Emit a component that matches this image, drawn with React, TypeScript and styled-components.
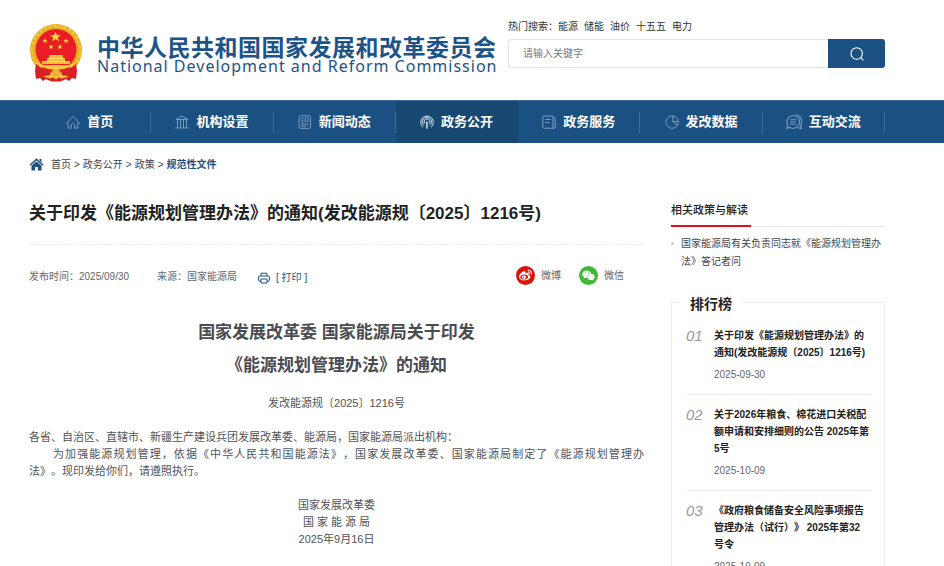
import React from "react";
import styled, { createGlobalStyle } from "styled-components";
import { FaWeibo, FaWeixin } from "react-icons/fa";

const BLUE = "#1b5182";

const GlobalStyle = createGlobalStyle`
  *, *::before, *::after { box-sizing: border-box; }
  body {
    margin: 0;
    background: #fff;
    color: #444;
    font-family: "Liberation Sans", "Noto Sans CJK SC", sans-serif;
    font-size: 10px;
    line-height: 17px;
    text-spacing-trim: space-all;
  }
  h1, h2, h3, p, ul, ol { margin: 0; padding: 0; }
  ul, ol { list-style: none; }
  a { color: inherit; text-decoration: none; }
`;

const Shell = styled.div`
  margin: 0 59px 0 29px;
`;

const Header = styled(Shell).attrs({ as: "header" })`
  display: flex;
  align-items: flex-start;
  justify-content: space-between;
  height: 100px;
`;

const Brand = styled.a`
  display: flex;
  align-items: flex-start;
  gap: 14px;
  padding-top: 24px;
  color: #1c5488;
  white-space: nowrap;
`;

const BrandText = styled.span`
  display: flex;
  flex-direction: column;
  padding-top: 10px;
`;

const BrandCn = styled.span`
  width: 399px;
  font-family: "Noto Sans CJK SC", sans-serif;
  font-size: 23px;
  font-weight: 700;
  line-height: 24px;
  text-align-last: justify;
`;

const BrandEn = styled.span`
  font-family: "Noto Sans", sans-serif;
  font-size: 16px;
  line-height: 16px;
  letter-spacing: 1px;
`;

const SearchArea = styled.div`
  width: 377px;
  padding-top: 18px;
`;

const HotWords = styled.div`
  display: flex;
  gap: 6px;
  line-height: 18px;
  color: #333;
`;

const HotLabel = styled.span`
  margin-right: -6px;
`;

const SearchForm = styled.form`
  display: flex;
  height: 29px;
  margin-top: 3px;
`;

const SearchInput = styled.input`
  flex: 1;
  min-width: 0;
  padding: 0 14px;
  border: 1px solid #e3e3e3;
  border-right: 0;
  border-radius: 3px 0 0 3px;
  font: inherit;
  color: #333;
  outline: none;
  &::placeholder { color: #777; opacity: 1; }
`;

const SearchButton = styled.button`
  display: flex;
  align-items: center;
  justify-content: center;
  width: 57px;
  padding: 0;
  border: 0;
  border-radius: 0 3px 3px 0;
  background: ${BLUE};
  color: #fff;
`;

const NavBar = styled.nav`
  background: ${BLUE};
  border-top: 1px solid #3b6b95;
`;

const NavList = styled(Shell).attrs({ as: "ul" })`
  display: grid;
  grid-template-columns: repeat(7, 1fr);
`;

const NavItem = styled.li<{ $active?: boolean }>`
  display: flex;
  align-items: center;
  height: 42px;
  background: ${(p) => (p.$active ? "#174872" : "transparent")};
  color: ${(p) => (p.$active ? "#d5e0ea" : "#7b9dbc")};
  &::after {
    content: "";
    width: 1px;
    height: 21px;
    background: ${(p) => (p.$active ? "transparent" : "#3c6c97")};
  }
`;

const NavLink = styled.a`
  display: flex;
  flex: 1;
  align-items: center;
  justify-content: center;
  gap: 7px;
`;

const NavText = styled.span`
  color: #fff;
  font-size: 13px;
  font-weight: 700;
  line-height: 20px;
`;

const Columns = styled(Shell).attrs({ as: "main" })`
  display: grid;
  grid-template-columns: minmax(0, 1fr) 214px;
  gap: 27px;
`;

const Crumbs = styled(Shell).attrs({ as: "nav" })`
  display: flex;
  align-items: center;
  gap: 3px;
  height: 43px;
  color: #444;
`;

const HomeLink = styled.a`
  display: flex;
  margin-right: 4px;
  color: ${BLUE};
`;

const CurrentCrumb = styled.a`
  color: ${BLUE};
  font-weight: 700;
`;

const Title = styled.h1`
  padding: 15px 0 17px;
  border-bottom: 1px dashed #e8e8e8;
  color: #222;
  font-size: 17px;
  line-height: 26px;
`;

const Meta = styled.div`
  display: flex;
  align-items: center;
  height: 63px;
  color: #666;
`;

const Source = styled.span`
  margin-left: 28px;
`;

const PrintButton = styled.button`
  display: flex;
  align-items: center;
  gap: 6px;
  margin-left: 21px;
  padding: 2px 0 0;
  border: 0;
  background: none;
  color: ${BLUE};
  font: inherit;
`;

const Share = styled.div`
  display: flex;
  gap: 18px;
  margin-left: auto;
  padding: 0 20px 2px 0;
`;

const ShareLink = styled.a`
  display: flex;
  align-items: center;
  gap: 6px;
`;

const Round = styled.span<{ $color: string }>`
  display: flex;
  align-items: center;
  justify-content: center;
  width: 19px;
  height: 19px;
  border-radius: 50%;
  background: ${(p) => p.$color};
  color: #fff;
`;

const DocTitle = styled.h2`
  padding-top: 8px;
  color: #4a4c52;
  font-size: 17px;
  line-height: 33px;
  text-align: center;
`;

const DocBody = styled.div`
  color: #505258;
  font-size: 11px;
  line-height: 17px;
`;

const Centered = styled.p`
  padding: 13px 0 17px;
  text-align: center;
`;

const Signature = styled.p`
  padding: 17px 0;
  text-align: center;
`;

const Spread = styled.span`
  display: block;
  padding-left: 24px;
  text-align-last: justify;
`;

const Side = styled.aside`
  padding-top: 12px;
`;

const SideHead = styled.div`
  display: flex;
  height: 29px;
  border-bottom: 1px solid #e6e6e6;
`;

const SideTitle = styled.h2`
  height: 29px;
  padding-right: 3px;
  border-bottom: 2px solid #d8131b;
  color: #222;
  font-size: 11px;
  font-weight: 500;
  line-height: 24px;
`;

const Related = styled.li`
  display: flex;
  gap: 7px;
  padding-top: 8px;
  line-height: 18px;
  &::before {
    content: "";
    flex: none;
    width: 3px;
    height: 3px;
    margin-top: 7px;
    border-radius: 50%;
    background: #ccc;
  }
`;

const RankBox = styled.fieldset`
  min-width: 0;
  margin: 19px 0 0;
  padding: 2px 14px 0;
  border: 1px solid #ebebeb;
`;

const RankLegend = styled.legend`
  margin-left: -6px;
  padding: 4px 10px 0;
  color: #222;
  font-size: 14px;
  font-weight: 700;
  line-height: 20px;
`;

const RankItem = styled.li`
  display: grid;
  grid-template-columns: 28px 1fr;
  padding: 11px 0;
  & + & { border-top: 1px solid #ebebeb; }
`;

const RankNo = styled.span`
  color: #999;
  font-size: 15px;
  font-style: italic;
`;

const RankTitle = styled.h3`
  color: #222;
  font-size: 10px;
  font-weight: 700;
  line-height: 17px;
`;

const RankDate = styled.time`
  display: block;
  padding-top: 5px;
  color: #666;
`;

const Emblem = () => (
  <svg width="54" height="58" viewBox="0 0 54 58" aria-hidden="true">
    <circle cx="27" cy="26" r="26" fill="#e8ae26" />
    <circle cx="27" cy="26" r="24" fill="none" stroke="#f4c843" strokeWidth="2" strokeDasharray="3 2" />
    <circle cx="27" cy="25.500" r="20.5" fill="#ea1c25" />
    <path d="M26.500 7.500 28 11.200h4l-3.200 2.400L30 17.400l-3.500-2.300L23 17.400l1.200-3.800L21 11.200h4z" fill="#fbd43c" />
    <g fill="#fbd43c">
      <path id="star" d="M16 14.200l.8 1.700h1.800l-1.400 1.200.5 1.900-1.700-1.100-1.700 1.100.5-1.900-1.400-1.200h1.800z" />
      <use href="#star" x="21" />
      <use href="#star" x="6" y="6" />
      <use href="#star" x="15" y="6" />
    </g>
    <path d="M20 31h14v3h2v3h5v3H13v-3h5v-3h2z" fill="#f4bd38" />
    <path d="M19 34.500h16M16 37.500h22" stroke="#fbdc72" strokeWidth="1" />
    <path d="M8 39q8 3 14 2h10q6 1 14-2l-1 4q-6 3-12 3l-6 2-6-2q-7 0-12-3z" fill="#f6c640" />
    <path d="M7 40q7 6 14 6v11l-4-2-3 2-3-3-4 1-1-8zM47 40q-7 6-14 6v11l4-2 3 2 3-3 4 1 1-8z" fill="#d71f25" />
    <path d="M13 43q7 3 14 3t14-3l-2 4q-5 2-12 2t-12-2z" fill="#e02026" />
    <circle cx="27" cy="49.500" r="4.500" fill="#efb431" />
    <path d="M14 53q5-3 9-1l4 2 4-2q4-2 9 1l-6 1-3 3h-8l-3-3z" fill="#f5c33a" />
    <path d="M20 55l4-1.500 3 2 3-2 4 1.500-2 2.500H22z" fill="#d71f25" />
  </svg>
);

const HomeIcon = () => (
  <svg width="15" height="13" viewBox="0 0 15 13" fill="currentColor" aria-hidden="true">
    <path d="M7.500 0.500 14.300 6.700 13.500 7.600 7.500 2.300 1.500 7.600.7 6.700z" stroke="currentColor" strokeWidth=".4" />
    <path d="M10.500 1h2v3.400l-2-1.800zM7.500 3.400l5 4.400v4.700H9V9H6v3.500H2.500V7.800z" />
  </svg>
);

const glyphs: Record<string, React.ReactNode> = {
  home: <path d="M.6 8.200 7 1.200l6.400 7H11.800v4.900H8.700V9.800c0-2-3.400-2-3.400 0v3.300H2.200V8.200z" />,
  bank: <path d="M1 4.500 7 1l6 3.500zM2.500 5v7.200M5.500 5v7.200M8.500 5v7.200M11.500 5v7.200M.5 12.900h13" />,
  news: (
    <>
      <rect x="1" y=".8" width="11.500" height="12.500" rx="1.500" />
      <path d="M3 3.200h2.500M3 5.200h2.500M3 7.200h2.500M3 9.200h7.500M3 11.200h5" />
      <circle cx="8.700" cy="4.800" r="2" />
    </>
  ),
  signal: (
    <>
      <path d="M3 12.200a6.300 6.300 0 1 1 8 0M4 10.200a4.500 4.500 0 1 1 6 0M5 8.400a2.700 2.700 0 1 1 4 0" />
      <path d="M7 6.500v7.300" strokeWidth="1.500" />
    </>
  ),
  book: <path d="M1.800 1h8.400c.6 0 .8.3.8.8v11.400H1.800c-.6 0-1-.4-1-1V2c0-.6.4-1 1-1zM3 4.500h5.500M3 7.500h4M11 2.500h1c.8 0 1.200.4 1.200 1v8.700c0 .6-.4 1-1.200 1h-1" />,
  pie: <path d="M6 1a6.200 6.200 0 1 0 7.200 7.200M7.800 1v5.500h5.600A5.600 5.600 0 0 0 7.800 1zM7.800 6.500l4.600 3.700M6 1l1.800 0M13.200 8.200l.2-1.700" />,
  chat: (
    <>
      <path d="M6.300 1.500a5.500 5.500 0 0 0-4.600 8.600l-.9 2.400 2.700-.8A5.500 5.500 0 1 0 6.300 1.500zM3.800 5h5M3.800 7h5M3.800 9h5" />
      <path d="M8.500.7a5.900 5.900 0 0 1 4.200 9.300l.8 2.700-3-.7" />
    </>
  ),
};

const NavIcon = ({ name }: { name: string }) => (
  <svg
    width={name === "chat" ? 16 : 14}
    height={name === "chat" ? 16 : 14}
    viewBox="0 0 14 14"
    fill="none"
    stroke="currentColor"
    strokeWidth="1"
    aria-hidden="true"
  >
    {glyphs[name]}
  </svg>
);

const navItems = [
  ["home", "首页"],
  ["bank", "机构设置"],
  ["news", "新闻动态"],
  ["signal", "政务公开"],
  ["book", "政务服务"],
  ["pie", "发改数据"],
  ["chat", "互动交流"],
];

const ranking = [
  { title: "关于印发《能源规划管理办法》的通知(发改能源规〔2025〕1216号)", date: "2025-09-30" },
  { title: "关于2026年粮食、棉花进口关税配额申请和安排细则的公告 2025年第5号", date: "2025-10-09" },
  { title: "《政府粮食储备安全风险事项报告管理办法（试行）》 2025年第32号令", date: "2025-10-09" },
];

export default function App() {
  return (
    <>
      <GlobalStyle />
      <Header>
        <Brand href="#">
          <Emblem />
          <BrandText>
            <BrandCn>中华人民共和国国家发展和改革委员会</BrandCn>
            <BrandEn>National Development and Reform Commission</BrandEn>
          </BrandText>
        </Brand>
        <SearchArea>
          <HotWords>
            <HotLabel>热门搜索：</HotLabel>
            {["能源", "储能", "油价", "十五五", "电力"].map((w) => (
              <a href="#" key={w}>{w}</a>
            ))}
          </HotWords>
          <SearchForm onSubmit={(e) => e.preventDefault()}>
            <SearchInput type="text" placeholder="请输入关键字" aria-label="请输入关键字" />
            <SearchButton type="submit" aria-label="搜索">
              <svg width="14" height="14" viewBox="0 0 14 14" fill="none" stroke="currentColor" strokeWidth="1.100" aria-hidden="true">
                <circle cx="6.700" cy="6.500" r="5.700" />
                <path d="m10.800 10.700 2.600 2.600" />
              </svg>
            </SearchButton>
          </SearchForm>
        </SearchArea>
      </Header>

      <NavBar>
        <NavList>
          {navItems.map(([icon, label]) => (
            <NavItem key={label} $active={icon === "signal"}>
              <NavLink href="#">
                <NavIcon name={icon} />
                <NavText>{label}</NavText>
              </NavLink>
            </NavItem>
          ))}
        </NavList>
      </NavBar>

      <Crumbs>
        <HomeLink href="#" aria-label="首页">
          <HomeIcon />
        </HomeLink>
        <a href="#">首页</a>
        <span>&gt;</span>
        <a href="#">政务公开</a>
        <span>&gt;</span>
        <a href="#">政策</a>
        <span>&gt;</span>
        <CurrentCrumb href="#">规范性文件</CurrentCrumb>
      </Crumbs>

      <Columns>
        <article>
          <Title>关于印发《能源规划管理办法》的通知(发改能源规〔2025〕1216号)</Title>
          <Meta>
            <span>发布时间：2025/09/30</span>
            <Source>来源：国家能源局</Source>
            <PrintButton type="button">
              <svg width="12" height="12" viewBox="0 0 12 12" fill="none" stroke="currentColor" aria-hidden="true">
                <path d="M3 4V1.200h6V4M3 9H1.200C.8 9 .6 8.800.6 8.400V4.800C.6 4.300.9 4 1.400 4h9.200c.5 0 .8.3.8.8v3.600c0 .4-.2.6-.6.6H9M3 7h6v4H3z" />
              </svg>
              <span>[ 打印 ]</span>
            </PrintButton>
            <Share>
              <ShareLink href="#">
                <Round $color="#d9150b"><FaWeibo size={13} /></Round>
                微博
              </ShareLink>
              <ShareLink href="#">
                <Round $color="#3fb834"><FaWeixin size={13} /></Round>
                微信
              </ShareLink>
            </Share>
          </Meta>
          <DocTitle>
            国家发展改革委 国家能源局关于印发
            <br />
            《能源规划管理办法》的通知
          </DocTitle>
          <DocBody>
            <Centered>发改能源规〔2025〕1216号</Centered>
            <p>各省、自治区、直辖市、新疆生产建设兵团发展改革委、能源局，国家能源局派出机构：</p>
            <p>
              <Spread>为加强能源规划管理，依据《中华人民共和国能源法》，国家发展改革委、国家能源局制定了《能源规划管理办</Spread>
              法》。现印发给你们，请遵照执行。
            </p>
            <Signature>
              国家发展改革委
              <br />
              国 家 能 源 局
              <br />
              2025年9月16日
            </Signature>
          </DocBody>
        </article>

        <Side>
          <SideHead>
            <SideTitle>相关政策与解读</SideTitle>
          </SideHead>
          <ul>
            <Related>
              <a href="#">国家能源局有关负责同志就《能源规划管理办法》答记者问</a>
            </Related>
          </ul>
          <RankBox>
            <RankLegend>排行榜</RankLegend>
            <ol>
              {ranking.map((r, i) => (
                <RankItem key={r.title}>
                  <RankNo>{"0" + (i + 1)}</RankNo>
                  <div>
                    <RankTitle><a href="#">{r.title}</a></RankTitle>
                    <RankDate>{r.date}</RankDate>
                  </div>
                </RankItem>
              ))}
            </ol>
          </RankBox>
        </Side>
      </Columns>
    </>
  );
}
